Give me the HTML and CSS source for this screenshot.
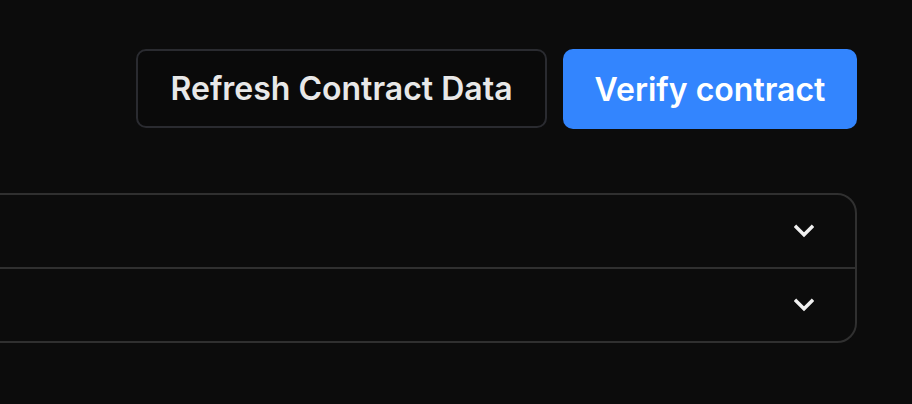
FILE: index.html
```html
<!DOCTYPE html>
<html>
<head>
<meta charset="utf-8">
<link rel="stylesheet" href="styles.css">
</head>
<body>
<div class="page">
  <div class="actions">
    <button class="btn btn-outline">Refresh Contract Data</button>
    <button class="btn btn-primary">Verify contract</button>
  </div>
  <div class="accordion">
    <div class="acc-row">
      <svg class="chev" width="20" height="16" viewBox="0 0 20 16"><path d="M2.2 4 L10 11.8 L17.8 4" fill="none" stroke="#f0f0f0" stroke-width="3.4" stroke-linecap="square"/></svg>
    </div>
    <div class="acc-row">
      <svg class="chev" width="20" height="16" viewBox="0 0 20 16"><path d="M2.2 4 L10 11.8 L17.8 4" fill="none" stroke="#f0f0f0" stroke-width="3.4" stroke-linecap="square"/></svg>
    </div>
  </div>
</div>
</body>
</html>
```
FILE: styles.css
```css
html, body {
  margin: 0;
  padding: 0;
  background: #0c0c0c;
  font-family: Inter, "Noto Sans", sans-serif;
}
.page {
  padding: 49px 55px 0 0;
}
.actions {
  display: flex;
  justify-content: flex-end;
  gap: 16px;
}
.btn {
  font-family: Inter, "Noto Sans", sans-serif;
  font-size: 32px;
  font-weight: 600;
  height: 80px;
  border-radius: 10px;
  padding: 0 20px;
  white-space: nowrap;
  cursor: pointer;
}
.btn-outline {
  background: #0a0a0a;
  color: #e8e8e8;
  border: 2px solid #2a2b30;
  height: 79px;
  width: 411px;
}
.btn-primary {
  background: #3385fe;
  color: #ffffff;
  border: none;
  width: 294px;
}
.accordion {
  margin-top: 64px;
  margin-left: -40px;
  border: 2px solid #303030;
  border-radius: 20px;
}
.acc-row {
  height: 72px;
  display: flex;
  align-items: center;
  justify-content: flex-end;
  padding-right: 41px;
}
.acc-row + .acc-row {
  border-top: 2px solid #303030;
}
.chev {
  display: block;
}
```
